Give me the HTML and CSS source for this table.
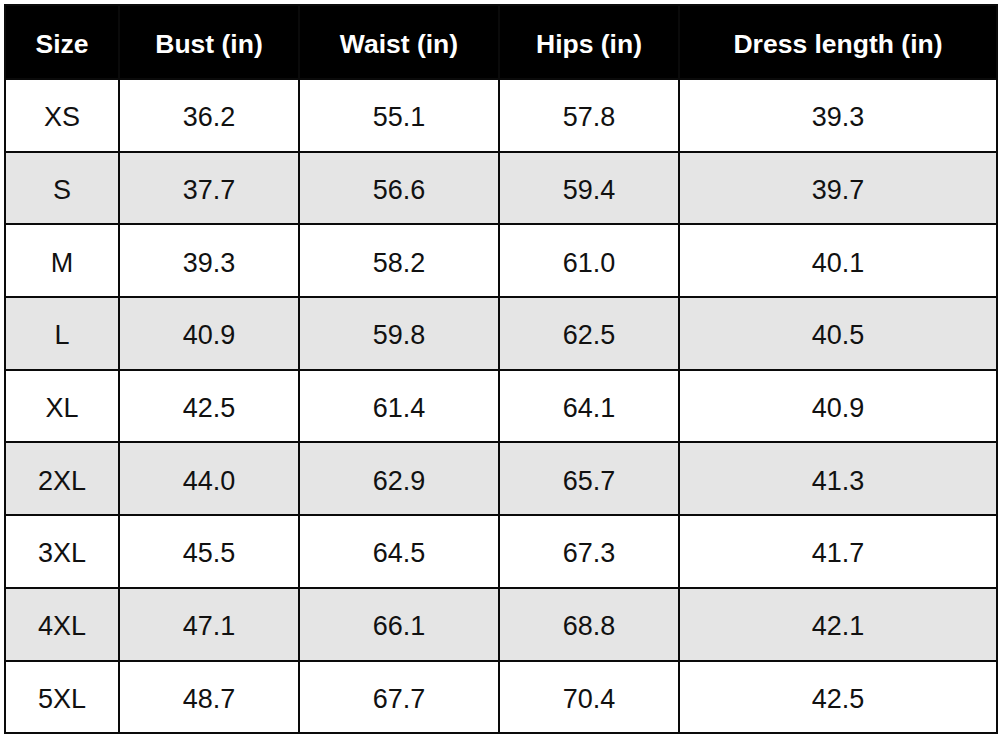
FILE: index.html
```html
<!DOCTYPE html>
<html>
<head>
<meta charset="utf-8">
<link rel="stylesheet" href="styles.css">
</head>
<body>
<table class="size-table">
  <colgroup>
    <col class="c1"><col class="c2"><col class="c3"><col class="c4"><col class="c5">
  </colgroup>
  <thead>
    <tr><th>Size</th><th>Bust (in)</th><th>Waist (in)</th><th>Hips (in)</th><th>Dress length (in)</th></tr>
  </thead>
  <tbody>
    <tr><td>XS</td><td>36.2</td><td>55.1</td><td>57.8</td><td>39.3</td></tr>
    <tr class="alt"><td>S</td><td>37.7</td><td>56.6</td><td>59.4</td><td>39.7</td></tr>
    <tr><td>M</td><td>39.3</td><td>58.2</td><td>61.0</td><td>40.1</td></tr>
    <tr class="alt"><td>L</td><td>40.9</td><td>59.8</td><td>62.5</td><td>40.5</td></tr>
    <tr><td>XL</td><td>42.5</td><td>61.4</td><td>64.1</td><td>40.9</td></tr>
    <tr class="alt"><td>2XL</td><td>44.0</td><td>62.9</td><td>65.7</td><td>41.3</td></tr>
    <tr><td>3XL</td><td>45.5</td><td>64.5</td><td>67.3</td><td>41.7</td></tr>
    <tr class="alt"><td>4XL</td><td>47.1</td><td>66.1</td><td>68.8</td><td>42.1</td></tr>
    <tr><td>5XL</td><td>48.7</td><td>67.7</td><td>70.4</td><td>42.5</td></tr>
  </tbody>
</table>
</body>
</html>
```

FILE: styles.css
```css
html, body {
  margin: 0;
  padding: 0;
  background: #ffffff;
}
body {
  padding: 4px 4px 0 4px;
  font-family: "Liberation Sans", Arial, sans-serif;
}
.size-table {
  border-collapse: collapse;
  table-layout: fixed;
  width: 992px;
  color: #111;
}
.c1 { width: 114px; }
.c2 { width: 180px; }
.c3 { width: 200px; }
.c4 { width: 180px; }
.c5 { width: 318px; }
.size-table th,
.size-table td {
  border: 2px solid #0a0a0a;
  text-align: center;
  vertical-align: middle;
  padding: 5px 0 0 0;
  box-sizing: border-box;
}
.size-table th {
  background: #000;
  color: #fff;
  font-weight: bold;
  font-size: 26.5px;
  height: 74px;
}
.size-table td {
  font-size: 27px;
  height: 72.7px;
}
.size-table tr.alt td {
  background: #e5e5e5;
}
```
